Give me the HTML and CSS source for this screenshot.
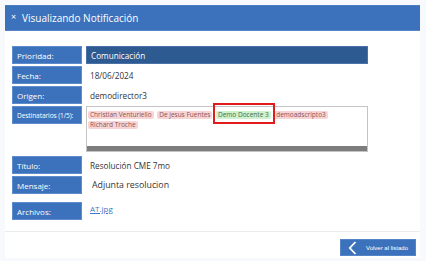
FILE: index.html
```html
<!DOCTYPE html>
<html lang="es">
<head>
<meta charset="utf-8">
<link rel="stylesheet" href="styles.css">
</head>
<body>
<div class="panel">
  <div class="header"><span class="close">×</span><span class="title">Visualizando Notificación</span></div>
  <div class="body">
    <div class="row">
      <div class="label">Prioridad:</div>
      <div class="value dark">Comunicación</div>
    </div>
    <div class="row">
      <div class="label">Fecha:</div>
      <div class="value">18/06/2024</div>
    </div>
    <div class="row">
      <div class="label">Origen:</div>
      <div class="value">demodirector3</div>
    </div>
    <div class="row dest">
      <div class="label small">Destinatarios (1/5):</div>
      <div class="box">
        <div class="tags">
          <span class="tag">Christian Venturiello</span>
          <span class="tag">De jesus Fuentes</span>
          <span class="tag ok mark">Demo Docente 3</span>
          <span class="tag">demoadscripto3</span>
          <span class="tag">Richard Troche</span>
        </div>
        <div class="scroll"></div>
      </div>
    </div>
    <div class="row">
      <div class="label">Título:</div>
      <div class="value">Resolución CME 7mo</div>
    </div>
    <div class="row">
      <div class="label">Mensaje:</div>
      <div class="value msg">Adjunta resolucion</div>
    </div>
    <div class="row files">
      <div class="label">Archivos:</div>
      <div class="value top"><a href="#" class="link">AT.jpg</a></div>
    </div>
  </div>
  <div class="footer">
    <button class="back">
      <svg width="9" height="14" viewBox="0 0 9 14"><path d="M7.5 1 L1.8 7 L7.5 13" fill="none" stroke="#fff" stroke-width="1.8"/></svg>
      <span>Volver al listado</span>
    </button>
  </div>
</div>
</body>
</html>
```
FILE: styles.css
```css
html, body {
  margin: 0;
  padding: 0;
  background: #f8f9fc;
  font-family: "Open Sans", "Liberation Sans", sans-serif;
}
.panel {
  margin: 5px 6px 3px 5px;
  background: #fff;
  height: 253px;
  display: flex;
  flex-direction: column;
}
.header {
  height: 26px;
  background: #3c72bc;
  border-top: 1px solid #4a7fc6;
  border-bottom: 1px solid #5585c8;
  box-sizing: border-box;
  display: flex;
  align-items: center;
  color: #fff;
}
.close {
  font-size: 9px;
  margin-left: 6px;
  width: 10px;
  line-height: 1;
  margin-top: -3px;
}
.title {
  font-size: 10px;
  margin-left: 1px;
}
.body {
  padding: 15px 0 0 7px;
  display: flex;
  flex-direction: column;
  gap: 2px;
  height: 176px;
}
.row {
  display: grid;
  grid-template-columns: 70px 282px;
  column-gap: 4px;
  height: 18px;
}
.label {
  background: #3c72bc;
  border: 1px solid #5d8dcc;
  box-sizing: border-box;
  color: #fff;
  font-size: 8px;
  display: flex;
  align-items: center;
  padding-left: 4px;
  height: 18px;
}
.label.small {
  font-size: 6.6px;
  letter-spacing: -0.1px;
}
.value {
  font-size: 8.2px;
  color: #333;
  display: flex;
  align-items: center;
  padding-left: 4px;
}
.value.dark {
  background: #2e5a92;
  color: #fff;
  border: 1px solid #4a72a8;
  box-sizing: border-box;
}
.value.msg {
  font-size: 8.8px;
  padding-left: 6px;
}
.value.top {
  align-items: flex-start;
  padding-top: 1px;
}
.row.dest {
  height: 46px;
  margin-bottom: 2px;
}
.box {
  border: 1px solid #c4c4c4;
  box-sizing: border-box;
  height: 46px;
  display: flex;
  flex-direction: column;
  justify-content: space-between;
}
.tags {
  display: flex;
  flex-wrap: wrap;
  gap: 1.5px 3.5px;
  padding: 3.5px 1px 0 1px;
  line-height: 1;
}
.tag {
  background: #f8d4d4;
  color: #8a5656;
  font-size: 6.5px;
  padding: 0.5px 2px;
  border-radius: 2px;
  line-height: 7.5px;
}
.tag.ok {
  background: #cdf2cd;
  color: #4c6c4c;
}
.mark {
  position: relative;
}
.mark::after {
  content: "";
  position: absolute;
  top: -8px;
  bottom: -5px;
  left: -3px;
  right: -4px;
  border: 2.5px solid #e41b1b;
}
.scroll {
  height: 5px;
  background: #7d7d7d;
}
.files {
  margin-top: 6px;
}
.link {
  color: #3a78c8;
  font-size: 8px;
  text-decoration: underline;
}
.footer {
  border-top: 1px solid #ececec;
  margin-top: 9px;
  flex: 1;
  display: flex;
  justify-content: flex-end;
  align-items: flex-start;
  padding: 7px 4px 0 0;
}
.back {
  background: #3c72bc;
  border: 1px solid #5585c8;
  width: 76px;
  height: 17px;
  display: flex;
  align-items: center;
  padding: 0 0 0 7px;
  gap: 9px;
  color: #fff;
  font-family: "Liberation Sans", sans-serif;
  font-size: 6px;
}
```
